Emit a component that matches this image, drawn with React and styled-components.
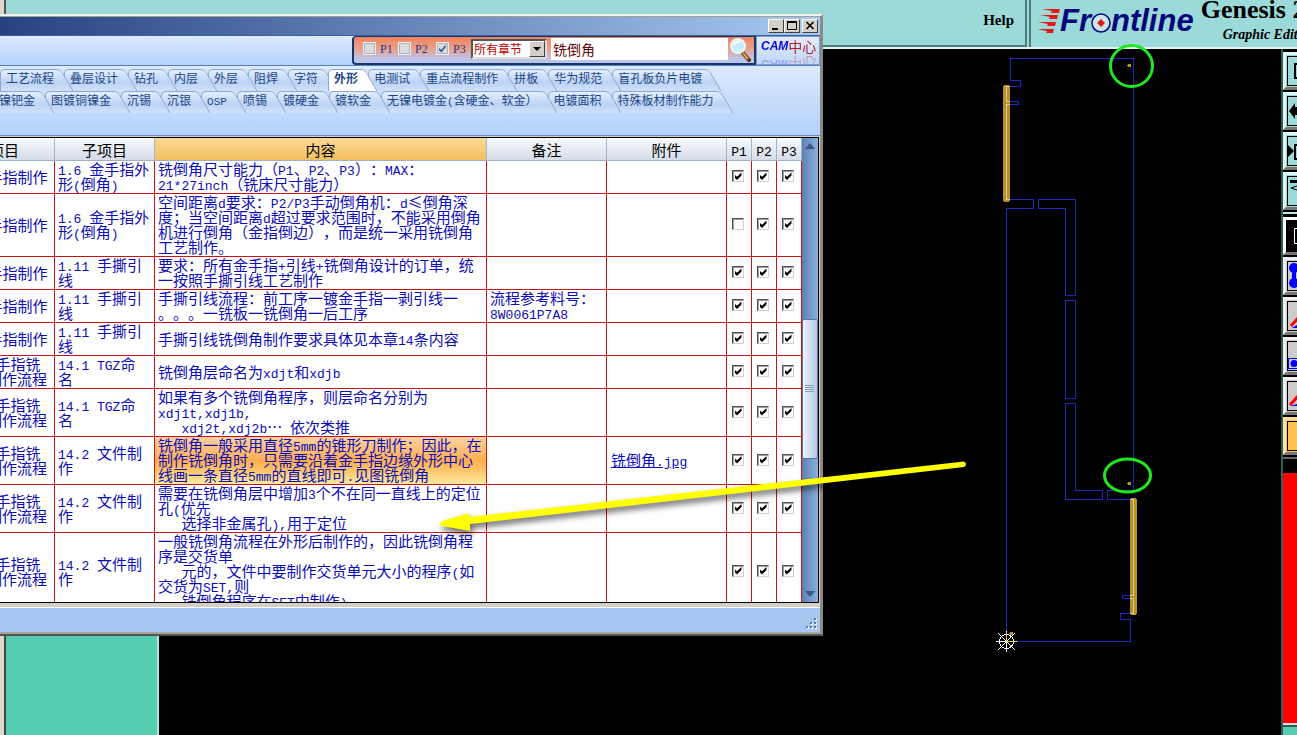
import React from "react"
import styled, { createGlobalStyle } from "styled-components"

const colors = {
  teal: "#9bdad8",
  tealDark: "#4c7a78",
  green: "#55cdb0",
  text: "#0c0cb8",
  tabText: "#1c4586",
  line: "#c81414",
  board: "#1c28c0",
  gold: "#b8921e",
  face: "#d4d0c8",
}

const cjk = `"Noto Sans CJK SC", sans-serif`
const serif = `"Liberation Serif", "Noto Sans CJK SC", serif`

const GlobalStyle = createGlobalStyle`
  * {
    box-sizing: border-box;
  }
  body {
    margin: 0;
    overflow: hidden;
    background: #000;
    font-family: ${cjk};
    text-spacing-trim: space-all;
  }
  button, input, select {
    font-family: inherit;
    border-radius: 0;
    margin: 0;
    padding: 0;
  }
`

/* ---------- background editor ---------- */

const Desktop = styled.div`
  position: relative;
  display: flex;
  flex-direction: column;
  height: 100vh;
  overflow: hidden;
`

const Header = styled.header`
  display: flex;
  height: 49px;
  background: ${colors.teal};
  border-bottom: 2px solid #e4f4f4;
  font-family: ${serif};
  font-weight: bold;
  color: #000;
`

const MenuBar = styled.nav`
  flex: 1;
  display: flex;
  justify-content: flex-end;
  align-items: center;
  padding: 0 11px 4px 0;
  border-left: 4px solid #dcd8d0;
  border-right: 2px solid ${colors.tealDark};
  border-bottom: 2px solid ${colors.tealDark};
  box-shadow: inset 2px 0 #555;
`

const HelpButton = styled.button`
  border: 0;
  background: none;
  font-size: 15px;
  font-weight: bold;
  color: #000;
`

const Brand = styled.div`
  display: flex;
  width: 268px;
  margin-left: 2px;
  padding-left: 6px;
  border-left: 2px solid ${colors.tealDark};
  overflow: hidden;
  white-space: nowrap;
`

const Logo = styled.div`
  display: flex;
  align-items: center;
  height: 42px;
  font: italic bold 31px "Liberation Sans", sans-serif;
  color: #06067c;
`

const Product = styled.div`
  padding-left: 7px;
  font-size: 26px;
  line-height: 20px;
  text-align: left;

  em {
    display: block;
    padding-left: 22px;
    font-size: 14px;
    line-height: 30px;
  }
`

const Body = styled.div`
  flex: 1;
  display: flex;
  min-height: 0;
`

const SidePanel = styled.aside`
  width: 159px;
  background: ${colors.green};
  border-left: 4px solid #dcd8d0;
  border-right: 2px solid #b8e8de;
  box-shadow: inset 2px 0 #444;
`

const Canvas = styled.main`
  flex: 1;
  display: flex;
  justify-content: flex-end;
  background: #000;

  svg {
    display: block;
  }
`

const ToolColumn = styled.div`
  display: flex;
  flex-direction: column;
  width: 16px;
  overflow: hidden;
  border-left: 2px solid #2c6058;
`

const ToolGroup = styled.div`
  display: flex;
  flex-direction: column;
  gap: 2px;
  padding-top: 3px;
  padding-bottom: 2px;
  border-bottom: 2px solid ${({ $edge }) => $edge};
`

const ToolButton = styled.button`
  width: 40px;
  height: 38px;
  background: ${({ $bg }) => $bg};
  border: 3px solid;
  border-color: ${({ $light }) => $light} #777 #777 ${({ $light }) => $light};

  svg {
    display: block;
  }
`

const Alert = styled.div`
  flex: 1;
  margin-top: 14px;
  background: #f00;
`

const ToolFoot = styled.div`
  height: 12px;
  background: ${colors.green};
  border-top: 2px solid #ddd;
  box-shadow: inset 0 2px #2c6058;
`

/* ---------- window ---------- */

const Window = styled.section`
  position: absolute;
  top: 14px;
  bottom: 99px;
  left: -46px;
  width: 67%;
  display: flex;
  flex-direction: column;
  background: ${colors.face};
  border-top: 3px ridge #f4f2ee;
  border-right: 3px solid #8c8a86;
  border-bottom: 4px ridge #a8a69f;
`

const TitleBar = styled.div`
  display: flex;
  justify-content: flex-end;
  align-items: center;
  height: 18px;
  padding-right: 2px;
  padding-left: 46px;
  background: linear-gradient(90deg, #1f3a7a, #a6caf0);
`

const CaptionButton = styled.button`
  display: flex;
  width: 16px;
  height: 14px;
  margin-left: ${({ $apart }) => ($apart ? 2 : 0)}px;
  background: ${colors.face};
  border: 1px solid;
  border-color: #fff #404040 #404040 #fff;
`

const Ribbon = styled.div`
  display: flex;
  justify-content: flex-end;
  height: 31px;
  border-top: 1px solid #3f5f9c;
  border-bottom: 1px solid #5c82ba;
  background: linear-gradient(#dceafd, #b2d2fd);
`

const SearchForm = styled.form`
  display: flex;
  align-items: center;
  width: 404px;
  padding: 0 2px 3px 10px;
  border: 1px solid #16366e;
  border-width: 1px 2px 2px;
  border-radius: 4px 0 0 4px;
  background: linear-gradient(#f2825c, #e8a08c 45%, #bcc4ea 85%);
`

const SmallCheck = styled.label`
  display: flex;
  align-items: center;
  gap: 5px;
  width: ${({ $w }) => $w}px;
  font-family: ${serif};
  font-size: 12px;
  line-height: 12px;
  color: #28387c;

  input {
    appearance: none;
    display: grid;
    width: 11px;
    height: 11px;
    background: #dcdcdc;
    border: 1px solid #a8b4c4;
    outline: 1px solid #f0f0f0;
  }
  input:checked::before {
    content: "";
    width: 9px;
    height: 9px;
    background: #3c5c94;
    clip-path: polygon(10% 45%, 40% 65%, 85% 5%, 85% 35%, 40% 95%, 10% 70%);
  }
`

const SelectBox = styled.div`
  display: flex;
  width: 76px;
  height: 20px;
  background: #fff;
  border: 2px solid;
  border-color: #555 #ddd #ddd #555;

  select {
    flex: 1;
    min-width: 0;
    appearance: none;
    border: 0;
    padding-left: 1px;
    background: none;
    font-size: 12px;
    line-height: 16px;
    color: #c00000;
  }
  span {
    display: grid;
    place-items: center;
    width: 16px;
    background: ${colors.face};
    border: 1px solid;
    border-color: #fff #404040 #404040 #fff;
  }
`

const SearchInput = styled.input`
  flex: 1;
  min-width: 0;
  height: 22px;
  margin-left: 4px;
  padding-left: 2px;
  border: 0;
  background: #fff;
  font-size: 14px;
  color: #640808;
`

const SearchButton = styled.button`
  width: 24px;
  height: 26px;
  border: 0;
  background: none;
`

const CamBadge = styled.div`
  width: 64px;
  padding-left: 4px;
  border: 1px solid #7c9cd0;
  background: linear-gradient(#e4ecfb, #c0d6f8);
  overflow: hidden;

  div {
    display: flex;
    align-items: center;
    height: 18px;
    font-size: 14px;
    line-height: 18px;
    color: #a82030;
    -webkit-box-reflect: below 0 linear-gradient(transparent, rgba(0, 0, 0, 0.4));
  }
  b {
    font-family: "Liberation Sans", sans-serif;
    font-style: italic;
    font-size: 12px;
    color: #0808d8;
  }
`

const TabPanel = styled.div`
  height: 70px;
  padding-top: 3px;
  overflow: hidden;
  border-bottom: 1px solid #6f8fc4;
  background: linear-gradient(#dde9fb, #b2d1fd);
`

const TabRow = styled.div`
  display: flex;
  isolation: isolate;
  padding-left: ${({ $start }) => $start}px;
`

const Tab = styled.button`
  position: relative;
  z-index: ${({ $order }) => $order};
  flex: none;
  display: flex;
  height: 22px;
  margin-right: -10px;
  border: 0;
  background: none;
  color: ${colors.tabText};
  font-size: 12px;
  line-height: 16px;
  font-weight: ${({ $active }) => ($active ? "bold" : "normal")};
  white-space: nowrap;

  > span {
    height: 22px;
    padding-left: 5px;
    border-top: 1px solid #8ca8d4;
    border-left: 1px solid #8ca8d4;
    border-radius: 5px 0 0 0;
    background: ${({ $active }) => ($active ? "#fff" : "linear-gradient(#e4effd, #bcd3f5 60%, #d0e1fa)")};
  }
  svg {
    display: block;
  }
`

const GridFrame = styled.div`
  flex: 1;
  display: flex;
  min-height: 0;
  margin-top: 1px;
  margin-right: 1px;
  border: 1px solid #000;
  border-left: 0;
  background: #fff;
`

const GridView = styled.div`
  flex: 1;
  min-width: 0;
  overflow: hidden;
`

const Table = styled.table`
  width: 100%;
  table-layout: fixed;
  border-collapse: separate;
  border-spacing: 0;
  font-size: 15px;
  line-height: 15px;
  color: ${colors.text};
`

const Th = styled.th`
  width: ${({ $w }) => ($w ? `${$w}px` : "auto")};
  height: 23px;
  padding: 0;
  font-weight: normal;
  color: #000;
  border-right: 1px solid #9cb6d4;
  border-bottom: 1px solid #9cb0c8;
  background: ${({ $hot }) =>
    $hot ? "linear-gradient(#f9d998, #f2c060)" : "linear-gradient(#f8fafc, #d4dce8)"};
`

const Td = styled.td`
  height: 33px;
  padding: 0 3px 2px;
  vertical-align: middle;
  white-space: pre;
  overflow: hidden;
  border-right: 1px solid ${colors.line};
  border-bottom: 1px solid ${colors.line};
  background: ${({ $hot }) =>
    $hot ? "linear-gradient(#fbd2a0, #fdbc74 30%, #ffae50 50%, #fbc468 70%, #faeaa0)" : "#fff"};
`

const Latin = styled.span`
  font-family: "Liberation Mono", monospace;
  font-size: ${({ $size }) => $size}px;
  line-height: 0;
`

const FileLink = styled.a`
  margin-left: 1px;
  color: #0808c8;
  text-decoration: underline;
`

const Check = styled.input`
  appearance: none;
  display: grid;
  width: 12px;
  height: 12px;
  margin: 0 0 0 2px !important;
  background: #fff;
  border: 1px solid;
  border-color: #505050 #d4d0c8 #d4d0c8 #505050;
  box-shadow: inset 1px 1px #a0a0a0;

  &:checked::before {
    content: "";
    width: 10px;
    height: 10px;
    background: #000;
    clip-path: polygon(20% 40%, 40% 58%, 85% 15%, 85% 45%, 40% 90%, 20% 70%);
  }
`

const ScrollBar = styled.div`
  display: flex;
  flex-direction: column;
  width: 16px;
  background: linear-gradient(90deg, #5c80b4, #8cb0dc);
`

const ScrollButton = styled.button`
  height: 16px;
  border: 0;
  background: none;

  svg {
    display: block;
    margin: 0 auto;
  }
`

const Track = styled.div`
  flex: ${({ $size }) => $size};
`

const Thumb = styled.div`
  flex: 138;
  display: grid;
  place-items: center;
  border: 1px solid #56759f;
  border-radius: 2px;
  background: linear-gradient(90deg, #f0f4fa, #d4dff0 45%, #b4c8e4);
`

const StatusBar = styled.footer`
  display: flex;
  justify-content: flex-end;
  align-items: flex-end;
  height: 25px;
  margin-top: 4px;
  padding: 0 3px 2px 0;
  border-top: 1px solid #fff;
  background: #a6c8f0;
`

const Marks = styled.svg`
  position: absolute;
  top: 0;
  left: 0;
  pointer-events: none;
`

/* ---------- data ---------- */

const tabsTop = ["工艺流程", "叠层设计", "钻孔", "内层", "外层", "阻焊", "字符", "外形", "电测试", "重点流程制作", "拼板", "华为规范", "盲孔板负片电镀"]
const tabsBottom = ["沉镍钯金", "图镀铜镍金", "沉锡", "沉银", "OSP", "喷锡", "镀硬金", "镀软金", "无镍电镀金(含硬金、软金）", "电镀面积", "特殊板材制作能力"]

const finger = "1 金手指制作"
const milling = "14 金手指铣\n倒角制作流程"

const rows = [
  { item: finger, sub: "1.6 金手指外\n形(倒角)", text: "铣倒角尺寸能力（P1、P2、P3）：MAX：\n21*27inch（铣床尺寸能力）" },
  { item: finger, sub: "1.6 金手指外\n形(倒角)", text: "空间距离d要求：P2/P3手动倒角机：d≤倒角深\n度；当空间距离d超过要求范围时，不能采用倒角\n机进行倒角（金指倒边），而是统一采用铣倒角\n工艺制作。", p1: false },
  { item: finger, sub: "1.11 手撕引\n线", text: "要求：所有金手指+引线+铣倒角设计的订单，统\n一按照手撕引线工艺制作" },
  { item: finger, sub: "1.11 手撕引\n线", text: "手撕引线流程：前工序一镀金手指一剥引线一\n。。。一铣板一铣倒角一后工序", note: "流程参考料号：\n8W0061P7A8" },
  { item: finger, sub: "1.11 手撕引\n线", text: "手撕引线铣倒角制作要求具体见本章14条内容" },
  { item: milling, sub: "14.1 TGZ命\n名", text: "铣倒角层命名为xdjt和xdjb" },
  { item: milling, sub: "14.1 TGZ命\n名", text: "如果有多个铣倒角程序，则层命名分别为\nxdj1t,xdj1b,\n   xdj2t,xdj2b… 依次类推" },
  { item: milling, sub: "14.2 文件制\n作", text: "铣倒角一般采用直径5mm的锥形刀制作；因此，在\n制作铣倒角时，只需要沿着金手指边缘外形中心\n线画一条直径5mm的直线即可.见图铣倒角", file: "铣倒角.jpg", hot: true },
  { item: milling, sub: "14.2 文件制\n作", text: "需要在铣倒角层中增加3个不在同一直线上的定位\n孔(优先\n   选择非金属孔),用于定位" },
  { item: milling, sub: "14.2 文件制\n作", text: "一般铣倒角流程在外形后制作的，因此铣倒角程\n序是交货单\n   元的，文件中要制作交货单元大小的程序(如\n交货为SET,则\n   铣倒角程序在SET中制作)" },
]

/* ---------- parts ---------- */

// half-width runs get the monospace face so that they keep half a cell each
const Mixed = ({ size = 13, children }) =>
  children.split(/([ -~]+)/).map((part, i) => (i % 2 ? <Latin key={i} $size={size}>{part}</Latin> : part))

const Tabs = ({ names, active, start }) => (
  <TabRow role="tablist" $start={start}>
    {names.map((name, i) => {
      const on = name === active
      return (
        <Tab key={name} role="tab" aria-selected={on} $active={on} $order={on ? 99 : names.length - i}>
          <span><Mixed size={11}>{name}</Mixed></span>
          <svg width="20" height="22">
            <path d="M0 0H2C8 0 9 4 12 10L19 22H0Z" fill={on ? "#fff" : "url(#tab)"} />
            <path d="M0 .5H2C8 .5 9 5 12 10L19 22" fill="none" stroke="#8ca8d4" />
          </svg>
        </Tab>
      )
    })}
  </TabRow>
)

const FrontlineLogo = () => (
  <Logo>
    <svg width="23" height="26">
      <g fill="#e41818">
        <path d="M5 1H23L22 5H14L15 3Z" />
        <path d="M3 7H21L20 11H12L13 9Z" />
        <path d="M1 14H19L18 18H10L11 16Z" />
        <path d="M0 21H17L16 25H9L10 23Z" />
      </g>
    </svg>
    Fr
    <svg width="20" height="26">
      <circle cx="10" cy="15" r="9" fill="#c8e8ec" stroke="#06067c" strokeWidth="1.5" />
      <path d="M10 11L14 15L10 19L6 15Z" fill="#e41818" />
    </svg>
    ntline
  </Logo>
)

const Board = () => (
  <svg width="300" height="686" viewBox="981 49 300 686" shapeRendering="crispEdges">
    <g stroke={colors.gold} strokeWidth="7" strokeLinecap="round">
      <path d="M1006.5 88V199" />
      <path d="M1133.5 501V612" />
    </g>
    <g fill="none" stroke={colors.board}>
      <path d="M1010.5 58.5H1133.5V490.5H1107.5V499.5H1133.5V595.5H1122.5V598.5H1133.5V613.5H1120.5V619.5H1130.5V641.5H1006.5V208.5H1033.5V199.5H1006.5V104.5H1018.5V101.5H1006.5V86.5H1020.5V80.5H1010.5Z" />
      <path d="M1038.5 199.5H1075.5V295.5H1065.5V208.5H1038.5Z" />
      <path d="M1065.5 300.5H1075.5V398.5H1065.5Z" />
      <path d="M1065.5 403.5H1075.5V490.5H1102.5V499.5H1065.5Z" />
    </g>
    <g fill="none" stroke="#dcc8a8">
      <path d="M1010 86.5H1006.5V101.5H1010M1010 104.5H1006.5V199.5H1010" />
      <path d="M1130 499.5H1133.5V595.5H1130M1130 598.5H1133.5V613.5H1130" />
    </g>
    <g fill={colors.gold}>
      <circle cx="1129.5" cy="65.5" r="2" />
      <circle cx="1129.5" cy="483.5" r="2" />
      <circle cx="1011.5" cy="633.5" r="2" />
    </g>
    <g fill="none" stroke="#fff">
      <circle cx="1006.5" cy="641.5" r="7" />
      <path d="M996 641.5H1017M1006.5 631V652M998 633L1015 650M1015 633L998 650" />
      <path d="M1006.5 632V641.5H1016" stroke="#e8d048" />
    </g>
  </svg>
)

const Frame = ({ stroke = "#000", children }) => (
  <svg width="34" height="32">
    <rect x="1.5" y="1.5" width="31" height="29" fill="none" stroke={stroke} />
    {children}
  </svg>
)

const Tools = () => (
  <ToolColumn>
    <ToolGroup $edge="#c8e8e4">
      <ToolButton $bg={colors.teal} $light="#e0f6f4" aria-label="zoom in">
        <Frame><rect x="9" y="9" width="14" height="14" fill="none" stroke="#000" strokeWidth="2" /></Frame>
      </ToolButton>
      <ToolButton $bg={colors.teal} $light="#e0f6f4" aria-label="pan">
        <Frame><path d="M3 16L9 8V12H16V20H9V24Z" /></Frame>
      </ToolButton>
      <ToolButton $bg={colors.teal} $light="#e0f6f4" aria-label="fit">
        <Frame><path d="M2 10L8 16L2 22Z" /><rect x="9" y="10" width="14" height="14" fill="none" stroke="#000" strokeWidth="2" /></Frame>
      </ToolButton>
      <ToolButton $bg={colors.teal} $light="#e0f6f4" aria-label="layers">
        <Frame><path d="M4 5H16V8H4Z" /><path d="M14 10L5 13L14 16" fill="none" stroke="#000" /></Frame>
      </ToolButton>
    </ToolGroup>
    <ToolGroup $edge="#666">
      <ToolButton $bg="#000" $light="#fff" aria-label="select">
        <Frame stroke="#000"><path d="M20 8.5H8.5V23.5H20M20 13.500H11.5V18.500H20" fill="none" stroke="#fff" /></Frame>
      </ToolButton>
      <ToolButton $bg="#ccc" $light="#f0f0f0" aria-label="line">
        <Frame><path d="M8 8V23" stroke="#00f" strokeWidth="4" /><circle cx="8" cy="8" r="5" fill="#00f" /><circle cx="8" cy="23" r="5" fill="#00f" /></Frame>
      </ToolButton>
      <ToolButton $bg="#ccc" $light="#f0f0f0" aria-label="move">
        <Frame><path d="M5 26L14 16" stroke="#f00" strokeWidth="3" /><path d="M6 28L14 23V28Z" fill="#00f" /></Frame>
      </ToolButton>
      <ToolButton $bg="#ccc" $light="#f0f0f0" aria-label="pad">
        <Frame><rect x="2.5" y="18.5" width="11" height="10" fill="none" stroke="#00f" /><circle cx="8" cy="23.5" r="3.5" fill="#00f" /></Frame>
      </ToolButton>
      <ToolButton $bg="#ccc" $light="#f0f0f0" aria-label="rotate">
        <Frame><path d="M4 25L14 14" stroke="#f00" strokeWidth="3" /><path d="M4 26L14 23V26Z" fill="#00f" /></Frame>
      </ToolButton>
      <ToolButton $bg="#ffc24c" $light="#ffe0a0" aria-label="color">
        <Frame />
      </ToolButton>
    </ToolGroup>
    <Alert />
    <ToolFoot />
  </ToolColumn>
)

const Row = ({ row }) => (
  <tr>
    <Td><Mixed>{row.item}</Mixed></Td>
    <Td><Mixed>{row.sub}</Mixed></Td>
    <Td $hot={row.hot}><Mixed>{row.text}</Mixed></Td>
    <Td>{row.note && <Mixed>{row.note}</Mixed>}</Td>
    <Td>{row.file && <FileLink href="#file"><Mixed>{row.file}</Mixed></FileLink>}</Td>
    <Td><Check type="checkbox" aria-label="P1" defaultChecked={row.p1 !== false} /></Td>
    <Td><Check type="checkbox" aria-label="P2" defaultChecked /></Td>
    <Td><Check type="checkbox" aria-label="P3" defaultChecked /></Td>
  </tr>
)

const RulesWindow = () => (
  <Window>
    <TitleBar>
      <CaptionButton aria-label="minimize">
        <svg width="14" height="12"><path d="M3 9H9" stroke="#000" strokeWidth="2" /></svg>
      </CaptionButton>
      <CaptionButton aria-label="maximize">
        <svg width="14" height="12"><path d="M2.5 1.5H11.5V9.5H2.5ZM2 2.5H12" fill="none" stroke="#000" /></svg>
      </CaptionButton>
      <CaptionButton $apart aria-label="close">
        <svg width="14" height="12"><path d="M3.5 2L10.5 9M10.5 2L3.5 9" stroke="#000" strokeWidth="1.6" /></svg>
      </CaptionButton>
    </TitleBar>
    <Ribbon>
      <SearchForm onSubmit={e => e.preventDefault()}>
        <SmallCheck $w={35}><input type="checkbox" />P1</SmallCheck>
        <SmallCheck $w={38}><input type="checkbox" />P2</SmallCheck>
        <SmallCheck $w={34}><input type="checkbox" defaultChecked />P3</SmallCheck>
        <SelectBox>
          <select aria-label="章节"><option>所有章节</option></select>
          <span><svg width="8" height="4"><path d="M0 0H8L4 4Z" /></svg></span>
        </SelectBox>
        <SearchInput aria-label="搜索" defaultValue="铣倒角" />
        <SearchButton aria-label="search">
          <svg width="24" height="26">
            <path d="M14 16L21 24" stroke="#5c3414" strokeWidth="4" strokeLinecap="round" />
            <path d="M15 17L20 23" stroke="#f0a050" strokeWidth="2" />
            <circle cx="10" cy="10" r="7" fill="#c8ecfa" stroke="#eef4f8" strokeWidth="2" />
            <path d="M6 9C7 6 10 5 12 6" stroke="#fff" strokeWidth="2" fill="none" />
          </svg>
        </SearchButton>
      </SearchForm>
      <CamBadge><div><b>CAM</b>中心</div></CamBadge>
    </Ribbon>
    <TabPanel>
      <Tabs names={tabsTop} active="外形" start={46} />
      <Tabs names={tabsBottom} start={27} />
    </TabPanel>
    <GridFrame>
      <GridView>
        <Table>
          <thead>
            <tr>
              <Th $w={101}>项目</Th>
              <Th $w={100}>子项目</Th>
              <Th $hot>内容</Th>
              <Th $w={120}>备注</Th>
              <Th $w={120}>附件</Th>
              <Th $w={25}><Mixed>P1</Mixed></Th>
              <Th $w={25}><Mixed>P2</Mixed></Th>
              <Th $w={25}><Mixed>P3</Mixed></Th>
            </tr>
          </thead>
          <tbody>
            {rows.map((row, i) => <Row key={i} row={row} />)}
          </tbody>
        </Table>
      </GridView>
      <ScrollBar>
        <ScrollButton aria-label="up"><svg width="10" height="6"><path d="M0 6L5 0L10 6Z" fill="#405880" /></svg></ScrollButton>
        <Track $size={166} />
        <Thumb><svg width="9" height="8"><path d="M0 .5H9M0 2.5H9M0 4.5H9M0 6.5H9" stroke="#8ca0bc" /></svg></Thumb>
        <Track $size={128} />
        <ScrollButton aria-label="down"><svg width="10" height="6"><path d="M0 0L5 6L10 0Z" fill="#405880" /></svg></ScrollButton>
      </ScrollBar>
    </GridFrame>
    <StatusBar>
      <svg width="12" height="12" shapeRendering="crispEdges">
        <path d="M9 0h2v2h-2zM5 4h2v2h-2zM9 4h2v2h-2zM1 8h2v2h-2zM5 8h2v2h-2zM9 8h2v2h-2z" fill="#fff" transform="translate(1 1)" />
        <path d="M9 0h2v2h-2zM5 4h2v2h-2zM9 4h2v2h-2zM1 8h2v2h-2zM5 8h2v2h-2zM9 8h2v2h-2z" fill="#5c7ca8" />
      </svg>
    </StatusBar>
  </Window>
)

const App = () => (
  <>
    <GlobalStyle />
    <Desktop lang="zh-CN">
      <svg width="0" height="0" style={{ position: "absolute" }}>
        <linearGradient id="tab" x2="0" y2="1">
          <stop stopColor="#e4effd" />
          <stop offset=".6" stopColor="#bcd3f5" />
          <stop offset="1" stopColor="#d0e1fa" />
        </linearGradient>
      </svg>
      <Header>
        <MenuBar><HelpButton>Help</HelpButton></MenuBar>
        <Brand>
          <FrontlineLogo />
          <Product>Genesis 2000<em>Graphic Editor</em></Product>
        </Brand>
      </Header>
      <Body>
        <SidePanel />
        <Canvas><Board /></Canvas>
        <Tools />
      </Body>
      <RulesWindow />
      <Marks width="100%" height="100%">
        <g fill="none" stroke="#20e820" strokeWidth="3">
          <ellipse cx="1131.5" cy="66" rx="21" ry="20.5" />
          <ellipse cx="1127.5" cy="475.5" rx="23" ry="16.5" />
        </g>
        <g style={{ filter: "drop-shadow(2px 4px 3px rgba(0, 0, 0, .6))" }}>
          <path d="M964 461.500Q968 464 964 467L470 524V531L442 526Q438 523 442 521L469 513V517Z" fill="#ff0" />
        </g>
      </Marks>
    </Desktop>
  </>
)

export default App
